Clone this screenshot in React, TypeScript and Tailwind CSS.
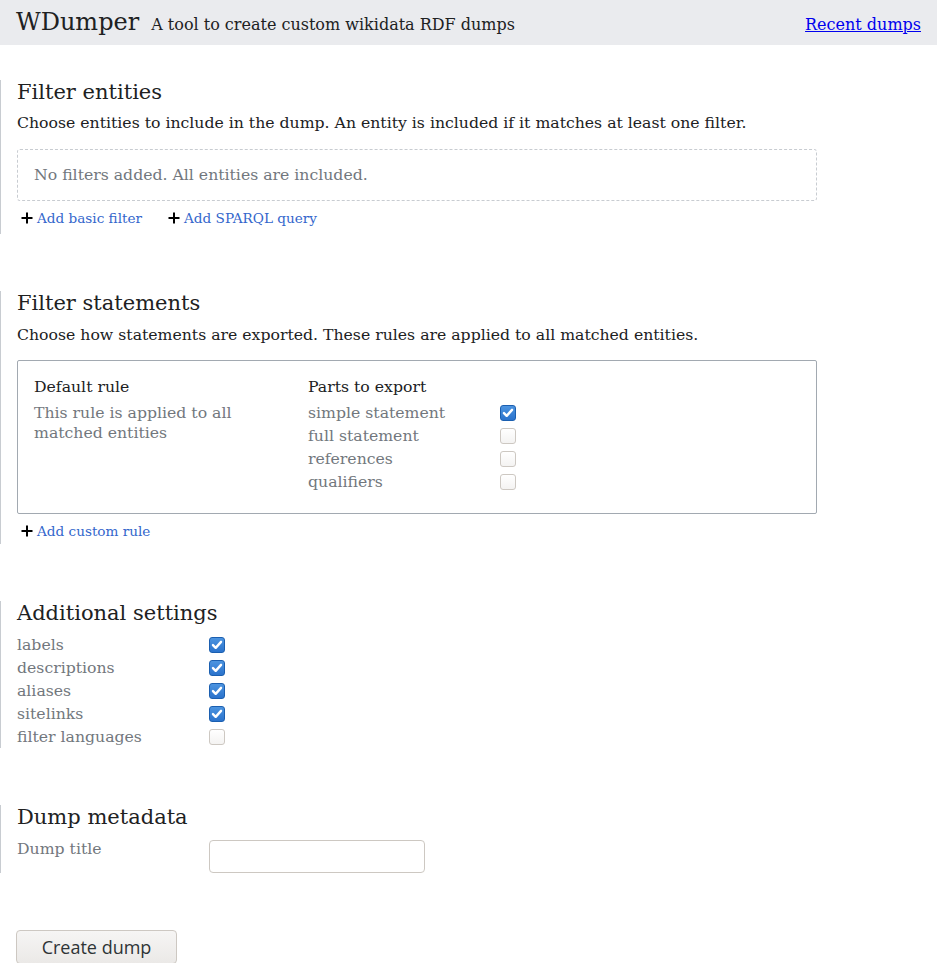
import React from 'react';

const serif = { fontFamily: '"DejaVu Serif", "Liberation Serif", serif' };

function Check({ on }: { on?: boolean }) {
  if (on) {
    return (
      <span className="inline-flex h-[16px] w-[16px] items-center justify-center rounded-[3px] border border-[#1b5fb0] bg-gradient-to-b from-[#4c94e0] to-[#2b73cc]">
        <svg width="12" height="12" viewBox="0 0 11 11">
          <path d="M1.8 5.6 L4.3 8.1 L9.2 2.6" fill="none" stroke="white" strokeWidth="2.2" strokeLinecap="round" strokeLinejoin="round" />
        </svg>
      </span>
    );
  }
  return <span className="inline-block h-[16px] w-[16px] rounded-[3px] border border-[#cdc8c2] bg-gradient-to-b from-white to-[#f4f3f2]" />;
}

function AddLink({ label }: { label: string }) {
  return (
    <span className="inline-flex items-center text-[13.6px] leading-[18px] text-[#3366cc]">
      <svg width="14" height="14" viewBox="0 0 14 14" className="ml-[3px] mr-[3px]">
        <path d="M7 1.5V12.5M1.5 7H12.5" stroke="black" strokeWidth="2" />
      </svg>
      {label}
    </span>
  );
}

function Section({ title, children }: { title: string; children: React.ReactNode }) {
  return (
    <section className="border-l border-[#c8ccd1] pl-4">
      <h2 className="text-[21px] leading-[24px] text-[#202122]">{title}</h2>
      {children}
    </section>
  );
}

function Row({ label, on }: { label: string; on?: boolean }) {
  return (
    <div className="flex h-[23px] items-center">
      <span className="w-[192px] text-[15.7px] text-[#72777d]">{label}</span>
      <Check on={on} />
    </div>
  );
}

export default function App() {
  return (
    <div className="min-h-screen bg-white text-[#202122]" style={serif}>
      <header className="flex h-[45px] items-baseline justify-between bg-[#eaebee] px-4 pt-[4px]">
        <div className="flex items-baseline gap-3">
          <span className="text-[24px] text-[#202122]">WDumper</span>
          <span className="text-[16px]">A tool to create custom wikidata RDF dumps</span>
        </div>
        <a href="#" className="text-[16px] text-[#0000ee] underline">Recent dumps</a>
      </header>

      <main className="mt-[35px]">
        <Section title="Filter entities">
          <p className="mt-[9px] text-[15.7px] leading-[20px]">
            Choose entities to include in the dump. An entity is included if it matches at least one filter.
          </p>
          <div className="mt-4 w-[800px] rounded-[3px] border border-dashed border-[#c8ccd1] px-4 py-[15px] text-[15.7px] leading-[20px] text-[#72777d]">
            No filters added. All entities are included.
          </div>
          <div className="mt-2 flex gap-[22px] pb-[7px]">
            <AddLink label="Add basic filter" />
            <AddLink label="Add SPARQL query" />
          </div>
        </Section>

        <div className="mt-[57px]">
          <Section title="Filter statements">
            <p className="mt-[10px] text-[15.7px] leading-[20px]">
              Choose how statements are exported. These rules are applied to all matched entities.
            </p>
            <div className="mt-[15px] flex w-[800px] rounded-[2px] border border-[#a2a9b1] px-4 pb-[20px] pt-4 text-[15.7px] leading-[20px]">
              <div className="w-[274px]">
                <div>Default rule</div>
                <div className="mt-[6px] w-[230px] text-[#72777d]">This rule is applied to all matched entities</div>
              </div>
              <div>
                <div>Parts to export</div>
                <div className="mt-1">
                  <Row label="simple statement" on />
                  <Row label="full statement" />
                  <Row label="references" />
                  <Row label="qualifiers" />
                </div>
              </div>
            </div>
            <div className="mt-[8px] flex pb-[4px]">
              <AddLink label="Add custom rule" />
            </div>
          </Section>
        </div>

        <div className="mt-[57px]">
          <Section title="Additional settings">
            <div className="mt-[8px]">
              <Row label="labels" on />
              <Row label="descriptions" on />
              <Row label="aliases" on />
              <Row label="sitelinks" on />
              <Row label="filter languages" />
            </div>
          </Section>
        </div>

        <div className="mt-[57px]">
          <Section title="Dump metadata">
            <div className="mt-[11px] flex items-start">
              <span className="w-[192px] text-[15.7px] leading-[18px] text-[#72777d]">Dump title</span>
              <input className="h-[33px] w-[216px] rounded-[4px] border border-[#cdc8c2] bg-white px-2 outline-none" />
            </div>
          </Section>
        </div>

        <button
          className="ml-4 mt-[57px] h-[34px] w-[161px] rounded-[4px] border border-[#cdc8c2] bg-gradient-to-b from-[#f6f5f4] to-[#ebe9e7] text-[18px] text-[#2e3436]"
          style={{ fontFamily: '"Open Sans", "Noto Sans", sans-serif' }}
        >
          Create dump
        </button>
      </main>
    </div>
  );
}
